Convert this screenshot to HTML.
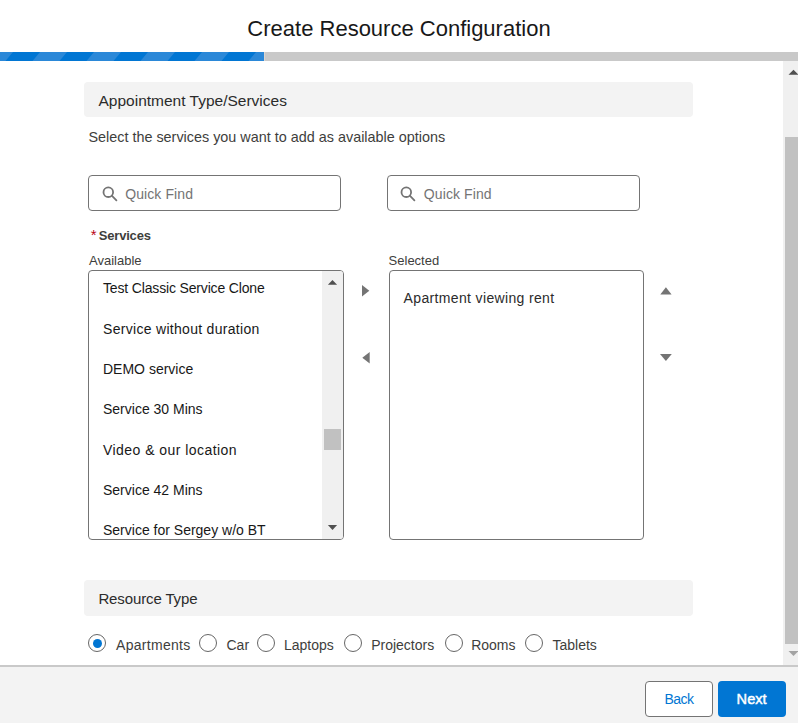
<!DOCTYPE html>
<html>
<head>
<meta charset="utf-8">
<style>
html,body{margin:0;padding:0;}
body{width:798px;height:723px;overflow:hidden;position:relative;background:#fff;font-family:"Liberation Sans",sans-serif;}
.a{position:absolute;}
.t{position:absolute;white-space:nowrap;line-height:1;}
.sy{}
.bar{left:0;top:52px;height:9px;width:264px;background-color:#0176d3;
  background-image:repeating-linear-gradient(45deg,#2b88d8 0,#2b88d8 19px,#0176d3 19px,#0176d3 38px);}
.barg{left:264px;top:52px;height:9px;width:534px;background:#c9c9c9;}
.sec{left:84px;width:609px;height:35px;background:#f3f3f3;border-radius:4px;}
.inp{height:34px;width:251px;border:1px solid #747474;border-radius:4px;background:#fff;}
.lb{border:1px solid #747474;border-radius:4px;background:#fff;}
.item{font-size:14px;color:#181818;left:103px;}
.radio{width:16px;height:16px;border:1px solid #666;border-radius:50%;top:634px;background:#fff;}
.rl{font-size:14px;color:#3e3e3c;top:637.6px;}
</style>
</head>
<body>
<!-- header -->
<div class="t" style="left:0;width:798px;text-align:center;top:18px;font-size:22px;letter-spacing:0;color:#181818;">Create Resource Configuration</div>
<svg class="a" style="left:0;top:52px" width="264" height="9"><rect width="264" height="9" fill="#0176d3"/><g fill="#2b88d8"><polygon points="-14,0 13,0 5.5,9 -21.5,9"/><polygon points="40,0 67,0 59.5,9 32.5,9"/><polygon points="94,0 121,0 113.5,9 86.5,9"/><polygon points="148,0 175,0 167.5,9 140.5,9"/><polygon points="202,0 229,0 221.5,9 194.5,9"/><polygon points="256,0 283,0 275.5,9 248.5,9"/></g></svg>
<div class="a barg"></div>
<div class="a" style="left:264px;top:52px;width:1px;height:9px;background:#dcd6d0;"></div>

<!-- body scrollbar -->
<div class="a" style="left:783px;top:61px;width:15px;height:604px;background:#f0f0f0;"></div>
<div class="a" style="left:785px;top:137px;width:13px;height:507px;background:#c1c1c1;"></div>
<svg class="a" style="left:783px;top:61px" width="15" height="604">
  <polygon points="5.5,13.8 10.5,8.8 15.5,13.8" fill="#505050"/>
  <polygon points="5.5,590 15.5,590 10.5,595" fill="#a3a3a3"/>
</svg>

<!-- section 1 -->
<div class="a sec" style="top:82px;"></div>
<div class="t" style="left:98.5px;top:92.6px;font-size:15.5px;color:#2b2b2b;">Appointment Type/Services</div>
<div class="t sy" style="left:88.4px;top:129.6px;font-size:14.4px;color:#3e3e3c;">Select the services you want to add as available options</div>

<!-- search inputs -->
<div class="a inp" style="left:88px;top:175px;"></div>
<div class="a inp" style="left:387px;top:175px;"></div>
<svg class="a" style="left:100px;top:183px" width="20" height="20"><circle cx="8.3" cy="9.2" r="4.8" fill="none" stroke="#747474" stroke-width="1.8"/><line x1="11.8" y1="12.7" x2="16.4" y2="17.3" stroke="#747474" stroke-width="1.8" stroke-linecap="round"/></svg>
<svg class="a" style="left:398px;top:183px" width="20" height="20"><circle cx="8.3" cy="9.2" r="4.8" fill="none" stroke="#747474" stroke-width="1.8"/><line x1="11.8" y1="12.7" x2="16.4" y2="17.3" stroke="#747474" stroke-width="1.8" stroke-linecap="round"/></svg>
<div class="t sy" style="left:125.2px;top:187px;font-size:14px;color:#747474;letter-spacing:0.1px;">Quick Find</div>
<div class="t sy" style="left:423.8px;top:187px;font-size:14px;color:#747474;letter-spacing:0.1px;">Quick Find</div>

<!-- labels -->
<div class="t" style="left:90.8px;top:227.3px;font-size:15px;color:#ba0517;">*</div>
<div class="t" style="left:98.8px;top:228.8px;font-size:13px;font-weight:bold;color:#3e3e3c;letter-spacing:-0.2px;">Services</div>
<div class="t" style="left:89px;top:253.6px;font-size:13px;color:#3e3e3c;">Available</div>
<div class="t" style="left:388.6px;top:253.9px;font-size:13px;color:#3e3e3c;">Selected</div>

<!-- available list -->
<div class="a lb" style="left:88px;top:270px;width:254px;height:268px;overflow:hidden;">
  <div class="a" style="left:233px;top:0;width:21px;height:268px;background:#f0f0f0;"></div>
  <div class="a" style="left:235px;top:158px;width:17px;height:21px;background:#c1c1c1;"></div>
  <svg class="a" style="left:233px;top:0" width="21" height="268">
    <polygon points="5.9,13.8 10.5,8.9 15.1,13.8" fill="#505050"/>
    <polygon points="5.9,254 15.1,254 10.5,259" fill="#505050"/>
  </svg>
</div>
<div class="t item sy" style="top:281.1px;letter-spacing:-0.16px;">Test Classic Service Clone</div>
<div class="t item sy" style="top:322.1px;letter-spacing:0.3px;">Service without duration</div>
<div class="t item sy" style="top:362.1px;">DEMO service</div>
<div class="t item sy" style="top:402.1px;">Service 30 Mins</div>
<div class="t item sy" style="top:443.1px;letter-spacing:0.45px;">Video &amp; our location</div>
<div class="t item sy" style="top:483.1px;">Service 42 Mins</div>
<div class="t item sy" style="top:523.1px;">Service for Sergey w/o BT</div>

<!-- move buttons -->
<svg class="a" style="left:355px;top:280px" width="20" height="90">
  <polygon points="7,5 7,16.6 14.3,10.8" fill="#747474"/>
  <polygon points="14.7,72 14.7,83.6 7.3,77.7" fill="#747474"/>
</svg>

<!-- selected list -->
<div class="a lb" style="left:389px;top:270px;width:253px;height:268px;"></div>
<div class="t sy" style="left:403.6px;top:290.9px;font-size:14px;color:#2b2b2b;letter-spacing:0.35px;">Apartment viewing rent</div>

<!-- order buttons -->
<svg class="a" style="left:650px;top:280px" width="30" height="90">
  <polygon points="10.3,14.5 21.6,14.5 15.9,7.3" fill="#747474"/>
  <polygon points="10,74 21.8,74 15.9,81" fill="#747474"/>
</svg>

<!-- section 2 -->
<div class="a sec" style="top:580px;height:36px;"></div>
<div class="t" style="left:98.4px;top:591.2px;font-size:15px;color:#2b2b2b;letter-spacing:-0.12px;">Resource Type</div>

<!-- radios -->
<div class="a radio" style="left:88px;"><div class="a" style="left:3.5px;top:3.5px;width:9px;height:9px;border-radius:50%;background:#0176d3;"></div></div>
<div class="t rl sy" style="left:116px;letter-spacing:0.3px;">Apartments</div>
<div class="a radio" style="left:199px;"></div>
<div class="t rl sy" style="left:226.5px;">Car</div>
<div class="a radio" style="left:257px;"></div>
<div class="t rl sy" style="left:284px;">Laptops</div>
<div class="a radio" style="left:344px;"></div>
<div class="t rl sy" style="left:371.2px;">Projectors</div>
<div class="a radio" style="left:445px;"></div>
<div class="t rl sy" style="left:471.2px;">Rooms</div>
<div class="a radio" style="left:525px;"></div>
<div class="t rl sy" style="left:552.5px;">Tablets</div>

<!-- footer -->
<div class="a" style="left:0;top:665px;width:798px;height:2px;background:#c9c9c9;"></div>
<div class="a" style="left:0;top:667px;width:798px;height:56px;background:#f3f3f3;"></div>
<div class="a" style="left:645px;top:681px;width:66px;height:34px;border:1px solid #747474;border-radius:4px;background:#fff;"></div>
<div class="t sy" style="left:664.5px;top:691.7px;font-size:14px;color:#0176d3;letter-spacing:-0.5px;">Back</div>
<div class="a" style="left:718px;top:681px;width:68px;height:36px;border-radius:4px;background:#0176d3;"></div>
<div class="t sy" style="left:736.6px;top:691.7px;font-size:14.6px;color:#fff;-webkit-text-stroke:0.45px #fff;">Next</div>
</body>
</html>
